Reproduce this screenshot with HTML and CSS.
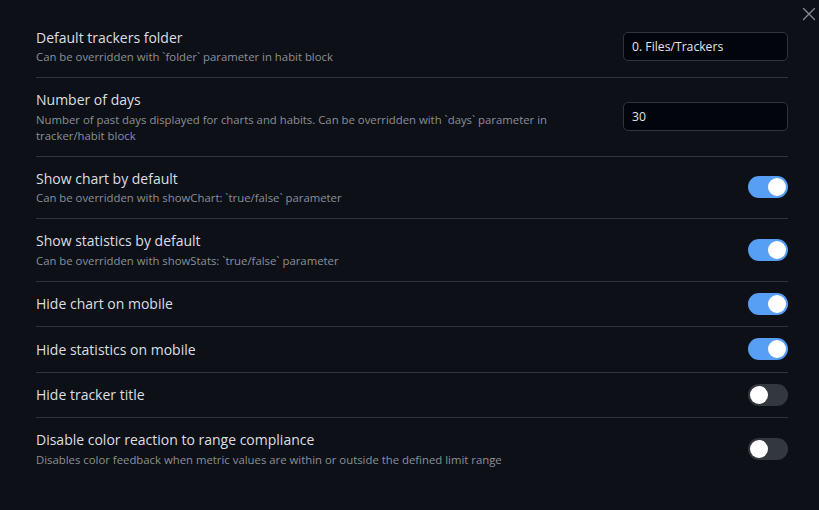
FILE: index.html
```html
<!DOCTYPE html>
<html lang="en">
<head>
<meta charset="utf-8">
<title>Settings</title>
<link rel="stylesheet" href="styles.css">
</head>
<body>
<div class="modal">
  <button class="close" aria-label="Close">
    <svg width="14" height="14" viewBox="0 0 14 14"><path d="M1.5 1.5 L12.5 12.5 M12.5 1.5 L1.5 12.5" stroke="currentColor" stroke-width="1.3" fill="none" stroke-linecap="round"/></svg>
  </button>
  <div class="settings">
    <div class="item">
      <div class="info">
        <div class="name">Default trackers folder</div>
        <div class="desc">Can be overridden with `folder` parameter in habit block</div>
      </div>
      <div class="control"><input class="text" type="text" value="0. Files/Trackers"></div>
    </div>
    <div class="item">
      <div class="info">
        <div class="name">Number of days</div>
        <div class="desc">Number of past days displayed for charts and habits. Can be overridden with `days` parameter in tracker/habit block</div>
      </div>
      <div class="control"><input class="text" type="text" value="30"></div>
    </div>
    <div class="item">
      <div class="info">
        <div class="name">Show chart by default</div>
        <div class="desc">Can be overridden with showChart: `true/false` parameter</div>
      </div>
      <div class="control"><span class="toggle on"><span class="knob"></span></span></div>
    </div>
    <div class="item">
      <div class="info">
        <div class="name">Show statistics by default</div>
        <div class="desc">Can be overridden with showStats: `true/false` parameter</div>
      </div>
      <div class="control"><span class="toggle on"><span class="knob"></span></span></div>
    </div>
    <div class="item">
      <div class="info">
        <div class="name">Hide chart on mobile</div>
      </div>
      <div class="control"><span class="toggle on"><span class="knob"></span></span></div>
    </div>
    <div class="item">
      <div class="info">
        <div class="name">Hide statistics on mobile</div>
      </div>
      <div class="control"><span class="toggle on"><span class="knob"></span></span></div>
    </div>
    <div class="item">
      <div class="info">
        <div class="name">Hide tracker title</div>
      </div>
      <div class="control"><span class="toggle"><span class="knob"></span></span></div>
    </div>
    <div class="item">
      <div class="info">
        <div class="name">Disable color reaction to range compliance</div>
        <div class="desc">Disables color feedback when metric values are within or outside the defined limit range</div>
      </div>
      <div class="control"><span class="toggle"><span class="knob"></span></span></div>
    </div>
  </div>
</div>
</body>
</html>
```
FILE: styles.css
```css
* { box-sizing: border-box; }
html, body {
  margin: 0;
  padding: 0;
  background: #0d1117;
  width: 819px;
  height: 510px;
  overflow: hidden;
}
body {
  font-family: "Open Sans", "Noto Sans", sans-serif;
  color: #dcdee3;
}
.modal {
  position: relative;
  height: 510px;
  padding: 15.5px 31px 0 36px;
}
.close {
  position: absolute;
  top: 6px;
  right: 1px;
  width: 18px;
  height: 16px;
  padding: 0;
  border: 0;
  background: transparent;
  color: #868b94;
  display: flex;
  align-items: center;
  justify-content: center;
}
.settings {
  display: flex;
  flex-direction: column;
}
.item {
  display: flex;
  align-items: center;
  padding: 12px 0;
  border-top: 1px solid #30343b;
}
.item:first-child {
  border-top: 0;
}
.info {
  flex: 1 1 auto;
  max-width: 545px;
  margin-right: 16px;
}
.name {
  font-size: 14px;
  line-height: 19.5px;
  color: #dcdee3;
}
.desc {
  font-size: 11.35px;
  line-height: 16px;
  padding-top: 2px;
  color: #8b8f97;
}
.control {
  flex: 1 1 auto;
  display: flex;
  justify-content: flex-end;
  align-items: center;
}
.text {
  width: 165px;
  height: 29px;
  background: #02050b;
  border: 1px solid #30343b;
  border-radius: 5px;
  padding: 0 8px;
  font-family: "Open Sans", "Noto Sans", sans-serif;
  font-size: 12.2px;
  color: #e2e4e8;
  outline: none;
}
.toggle {
  display: flex;
  align-items: center;
  width: 40px;
  height: 22px;
  margin: -0.75px 0;
  padding: 2px;
  border-radius: 11px;
  background: #33373e;
}
.toggle.on {
  background: #579ef5;
  justify-content: flex-end;
}
.knob {
  width: 18px;
  height: 18px;
  border-radius: 50%;
  background: #ffffff;
}
```
